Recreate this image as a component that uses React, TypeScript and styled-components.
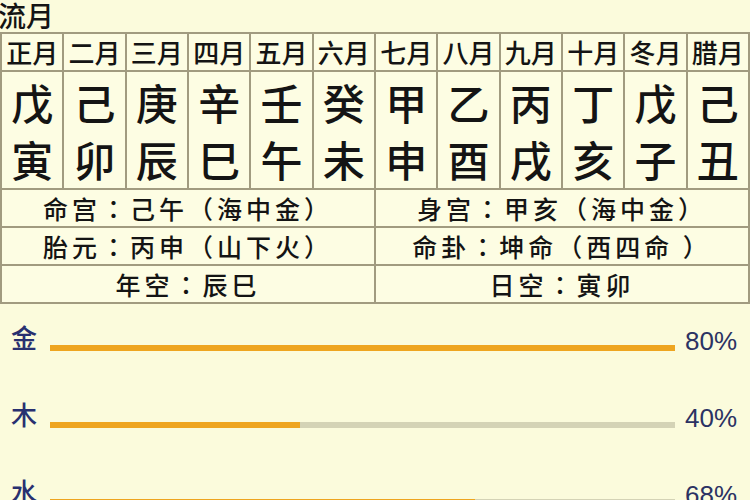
import React from "react";
import styled, { createGlobalStyle } from "styled-components";

const Global = createGlobalStyle`
  html, body { margin: 0; padding: 0; background: #fbfbdc; }
  body { font-family: "Noto Sans CJK SC", "Noto Sans", sans-serif; }
`;

const Page = styled.div`
  width: 750px;
  height: 500px;
  overflow: hidden;
  background: #fbfbdc;
  color: #141414;
`;

const Title = styled.div`
  height: 32px;
  font-size: 28px;
  line-height: 31px;
  margin-left: -2px;
  font-weight: 500;
`;

const Table = styled.div`
  display: grid;
  grid-template-columns: repeat(12, 1fr);
  grid-template-rows: 36px 116px 36px 36px 36px;
  gap: 2px;
  padding: 2px;
  background: #a19b80;
  width: 750px;
  box-sizing: border-box;
  font-weight: 500;
`;

const Cell = styled.div`
  background: #fdfde3;
  display: flex;
  align-items: center;
  justify-content: center;
`;

const MonthCell = styled(Cell)`
  font-size: 26px;
  line-height: 1;
  white-space: nowrap;
`;

const PillarCell = styled(Cell)`
  flex-direction: column;
  font-size: 42px;
  line-height: 57px;
`;

const InfoCell = styled(Cell)`
  grid-column: span 6;
  font-size: 25px;
  letter-spacing: 4px;
  white-space: pre;
`;

const Colon = styled.span`
  font-family: "Noto Sans CJK TC", "Noto Sans CJK SC", sans-serif;
`;

const Chart = styled.div`
  display: grid;
  grid-template-columns: 50px 625px 75px;
  grid-auto-rows: 30px;
  row-gap: 47px;
  padding-top: 18px;
  align-items: end;
`;

const Label = styled.div`
  padding-left: 11px;
  font-size: 26px;
  line-height: 30px;
  color: #283070;
  font-weight: 500;
`;

const Track = styled.div`
  height: 6px;
  margin-bottom: 1px;
  background: #d4d3b6;
`;

const Fill = styled.div`
  height: 100%;
  background: #eea520;
`;

const Pct = styled.div`
  padding-left: 10px;
  font-family: "Liberation Sans", Arial, sans-serif;
  font-size: 26px;
  line-height: 30px;
  color: #2b3263;
  align-self: start;
  padding-top: 4px;
`;

const months = ["正月", "二月", "三月", "四月", "五月", "六月", "七月", "八月", "九月", "十月", "冬月", "腊月"];
const pillars = [
  ["戊", "寅"], ["己", "卯"], ["庚", "辰"], ["辛", "巳"], ["壬", "午"], ["癸", "未"],
  ["甲", "申"], ["乙", "酉"], ["丙", "戌"], ["丁", "亥"], ["戊", "子"], ["己", "丑"],
];
const info: [string, string][] = [
  ["命宫", "己午（海中金）"], ["身宫", "甲亥（海中金）"],
  ["胎元", "丙申（山下火）"], ["命卦", "坤命（西四命 ）"],
  ["年空", "辰巳"], ["日空", "寅卯"],
];
const elements = [
  { name: "金", pct: "80%", fill: 100 },
  { name: "木", pct: "40%", fill: 40 },
  { name: "水", pct: "68%", fill: 68 },
];

export default function App() {
  return (
    <Page>
      <Global />
      <Title>流月</Title>
      <Table>
        {months.map((m) => (
          <MonthCell key={m}>{m}</MonthCell>
        ))}
        {pillars.map(([a, b], i) => (
          <PillarCell key={i}>
            <span>{a}</span>
            <span>{b}</span>
          </PillarCell>
        ))}
        {info.map(([k, v]) => (
          <InfoCell key={k}>
            {k}
            <Colon>：</Colon>
            {v}
          </InfoCell>
        ))}
      </Table>
      <Chart>
        {elements.map((e) => (
          <React.Fragment key={e.name}>
            <Label>{e.name}</Label>
            <Track>
              <Fill style={{ width: `${e.fill}%` }} />
            </Track>
            <Pct>{e.pct}</Pct>
          </React.Fragment>
        ))}
      </Chart>
    </Page>
  );
}
